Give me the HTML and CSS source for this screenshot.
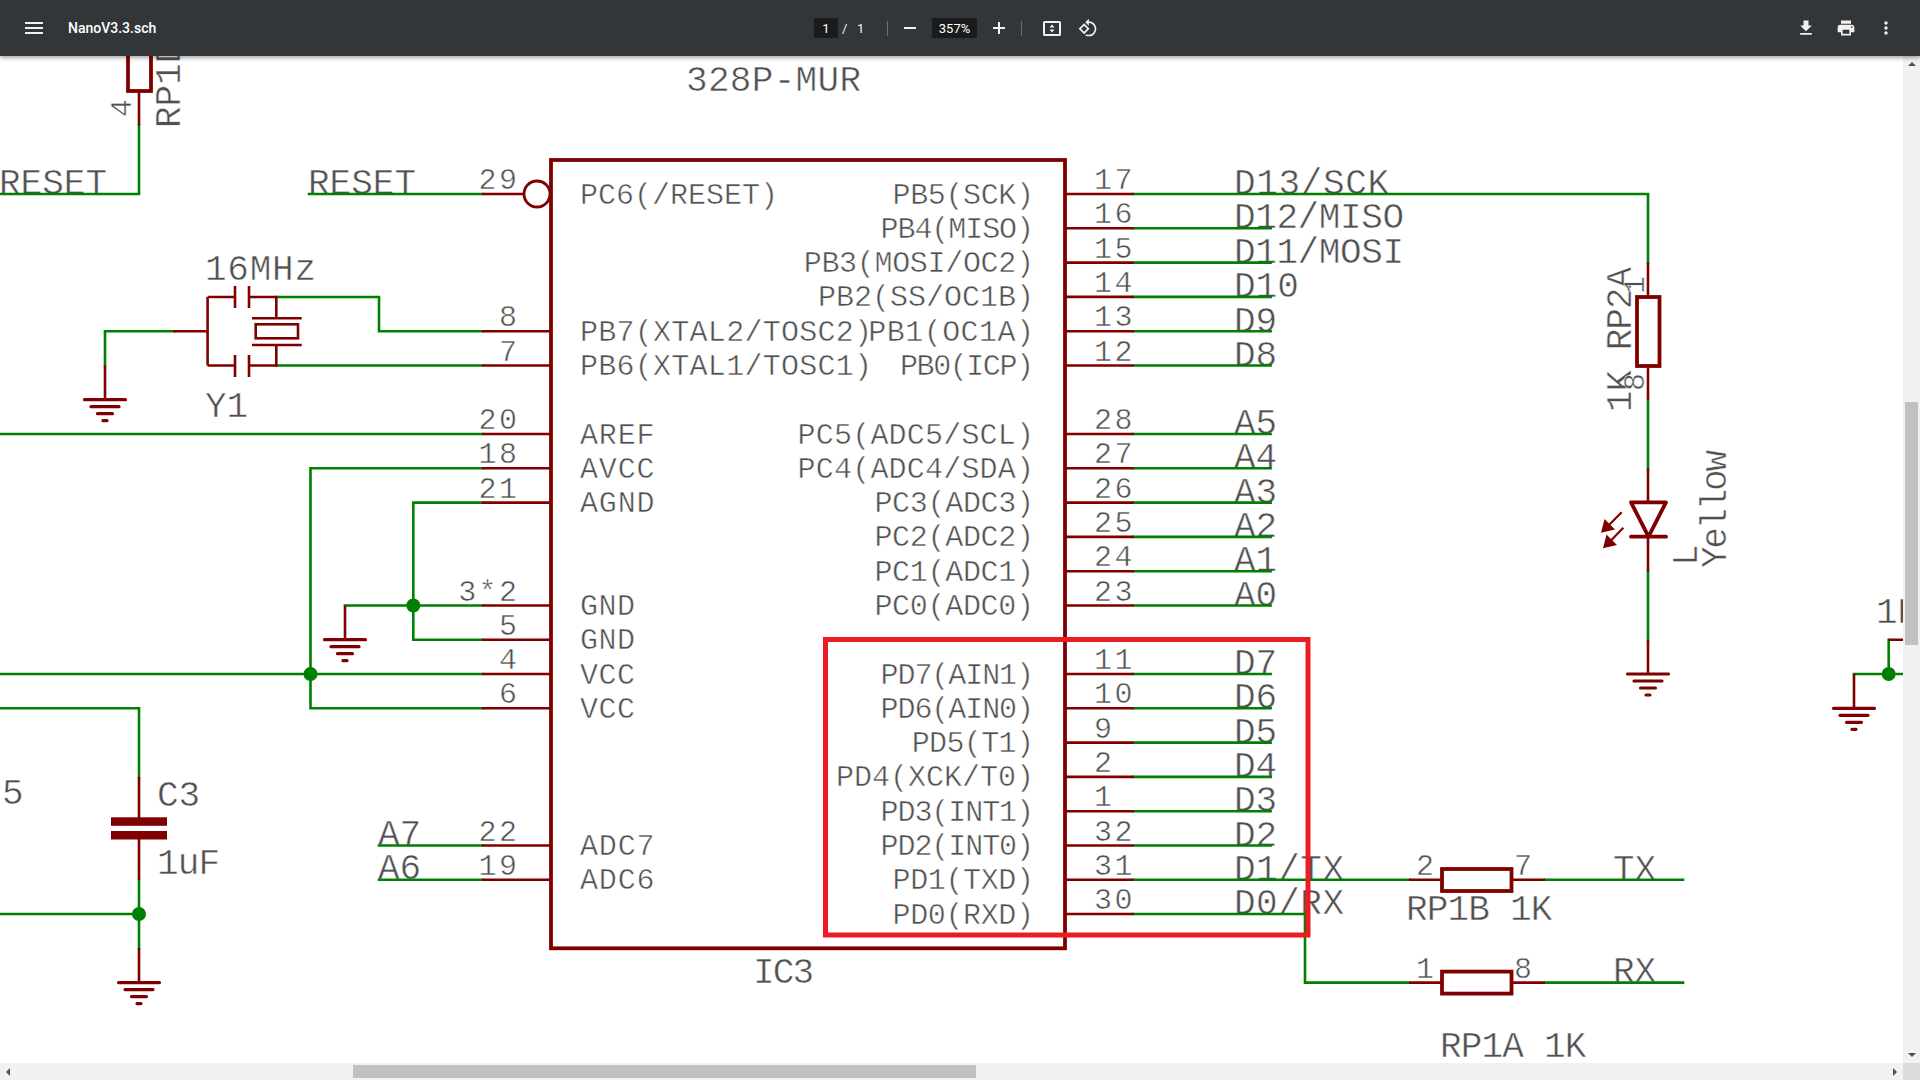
FILE: index.html
```
<!DOCTYPE html>
<html lang="en">
<head>
<meta charset="utf-8">
<title>NanoV3.3.sch</title>
<link rel="stylesheet" href="styles.css">
</head>
<body>
<header class="toolbar">
  <div class="tb-left">
    <svg class="ic ic-menu" viewBox="0 0 24 24"><path d="M3 18h18v-2H3v2zm0-5h18v-2H3v2zm0-7v2h18V6H3z"/></svg>
    <span class="title">NanoV3.3.sch</span>
  </div>
  <div class="tb-center">
    <span class="field field-page">1</span>
    <span class="pages"><span class="slash">/</span><span>1</span></span>
    <span class="sep sep-a"></span>
    <svg class="ic ic-zoom" viewBox="0 0 12 12"><path d="M0 5h12v2H0z"/></svg>
    <span class="field field-zoom">357%</span>
    <svg class="ic ic-zoom" viewBox="0 0 12 12"><path d="M0 5h5V0h2v5h5v2H7v5H5V7H0z"/></svg>
    <span class="sep sep-b"></span>
    <svg class="ic ic-fit" viewBox="0 0 18 15"><path fill-rule="evenodd" d="M1.500 0h15A1.500 1.500 0 0 1 18 1.500v12a1.500 1.500 0 0 1-1.500 1.500h-15A1.500 1.500 0 0 1 0 13.500v-12A1.500 1.500 0 0 1 1.500 0zM2 2v11h14V2z"/><path d="M9 3.500l2.500 3h-5zM9 11.500l-2.500-3h5z"/></svg>
    <svg class="ic ic-rotate" viewBox="0 0 24 24"><path d="M7.340 6.410L.86 12.900l6.490 6.480 6.490-6.480-6.500-6.490zM3.690 12.900l3.660-3.660L11 12.900l-3.660 3.660-3.650-3.660zm15.670-6.260C17.610 4.880 15.300 4 13 4V.76L8.760 5 13 9.240V6c1.790 0 3.580.680 4.950 2.050 2.730 2.730 2.730 7.170 0 9.900C16.580 19.320 14.790 20 13 20c-.970 0-1.940-.210-2.840-.610l-1.490 1.490C10.020 21.620 11.510 22 13 22c2.300 0 4.610-.880 6.360-2.640 3.520-3.510 3.520-9.210 0-12.720z"/></svg>
  </div>
  <div class="tb-right">
    <svg class="ic ic-act" viewBox="0 0 24 24"><path d="M19 9h-4V3H9v6H5l7 7 7-7zM5 18v2h14v-2H5z"/></svg>
    <svg class="ic ic-act" viewBox="0 0 24 24"><path d="M19 8H5c-1.660 0-3 1.340-3 3v6h4v4h12v-4h4v-6c0-1.660-1.340-3-3-3zm-3 11H8v-5h8v5zm3-7c-.550 0-1-.450-1-1s.450-1 1-1 1 .450 1 1-.450 1-1 1zm-1-9H6v4h12V3z"/></svg>
    <svg class="ic ic-act" viewBox="0 0 24 24"><path d="M12 8c1.100 0 2-.900 2-2s-.900-2-2-2-2 .900-2 2 .900 2 2 2zm0 2c-1.100 0-2 .900-2 2s.900 2 2 2 2-.900 2-2-.900-2-2-2zm0 6c-1.100 0-2 .900-2 2s.900 2 2 2 2-.900 2-2-.900-2-2-2z"/></svg>
  </div>
</header>
<main class="viewer">
  <svg class="sheet" viewBox="0 56 1903 1007" width="1903" height="1007">
    <defs>
      <g id="gnd">
        <path class="gb" d="M-20.500 0h41M-14 7h28M-7.500 14h15M-2 21h4"/>
      </g>
      <g id="dot"><circle class="dot" r="7"/></g>
    </defs>

    <!-- large labels -->
    <g class="lbl">
      <text x="686" y="91" textLength="175">328P-MUR</text>
      <text x="753" y="983" textLength="61">IC3</text>
      <text x="-1" y="193.500" textLength="108">RESET</text>
      <text x="308" y="193.500" textLength="108">RESET</text>
      <text x="205" y="280" textLength="111">16MHz</text>
      <text x="205" y="417">Y1</text>
      <text x="2" y="804">5</text>
      <text x="157" y="805.500">C3</text>
      <text x="157" y="874" textLength="63">1uF</text>
      <text x="378" y="845">A7</text>
      <text x="378" y="879">A6</text>
      <text x="1234" y="193.500" textLength="155">D13/SCK</text>
      <text x="1234" y="228" textLength="170">D12/MISO</text>
      <text x="1234" y="262.500" textLength="170">D11/MOSI</text>
      <text x="1234" y="297">D10</text>
      <text x="1234" y="331.500">D9</text>
      <text x="1234" y="365.500">D8</text>
      <text x="1234" y="434">A5</text>
      <text x="1234" y="468">A4</text>
      <text x="1234" y="502.500">A3</text>
      <text x="1234" y="536.500">A2</text>
      <text x="1234" y="571">A1</text>
      <text x="1234" y="605.500">A0</text>
      <text x="1234" y="674">D7</text>
      <text x="1234" y="708">D6</text>
      <text x="1234" y="742.500">D5</text>
      <text x="1234" y="776.500">D4</text>
      <text x="1234" y="811">D3</text>
      <text x="1234" y="845.500">D2</text>
      <text x="1234" y="879.500" textLength="110">D1/TX</text>
      <text x="1234" y="913.500" textLength="110">D0/RX</text>
      <text x="1613" y="879.500">TX</text>
      <text x="1613" y="982">RX</text>
      <text x="1406" y="920" textLength="146.300">RP1B 1K</text>
      <text x="1440" y="1057" textLength="146.300">RP1A 1K</text>
      <text x="1876" y="623">1K</text>
      <text transform="translate(180 128) rotate(-90)">RP1D</text>
      <text transform="translate(1631 412) rotate(-90)" textLength="145">1K RP2A</text>
      <text transform="translate(1696.500 566) rotate(-90)">L</text>
      <text transform="translate(1725.500 568) rotate(-90)" textLength="118">Yellow</text>
    </g>

    <!-- pin numbers and small labels -->
    <g class="num pinno end">
      <text x="519.400" y="189">29</text>
      <text x="519.400" y="326.200">8</text>
      <text x="519.400" y="360.500">7</text>
      <text x="519.400" y="429">20</text>
      <text x="519.400" y="463.300">18</text>
      <text x="519.400" y="497.600">21</text>
      <text x="519.400" y="600.500">3*2</text>
      <text x="519.400" y="634.700">5</text>
      <text x="519.400" y="669">4</text>
      <text x="519.400" y="703.300">6</text>
      <text x="519.400" y="840.500">22</text>
      <text x="519.400" y="874.700">19</text>
    </g>
    <g class="num pinno">
      <text x="1094" y="189">17</text>
      <text x="1094" y="223.300">16</text>
      <text x="1094" y="257.600">15</text>
      <text x="1094" y="291.900">14</text>
      <text x="1094" y="326.200">13</text>
      <text x="1094" y="360.500">12</text>
      <text x="1094" y="429">28</text>
      <text x="1094" y="463.300">27</text>
      <text x="1094" y="497.600">26</text>
      <text x="1094" y="531.900">25</text>
      <text x="1094" y="566.200">24</text>
      <text x="1094" y="600.500">23</text>
      <text x="1094" y="669">11</text>
      <text x="1094" y="703.300">10</text>
      <text x="1094" y="737.600">9</text>
      <text x="1094" y="771.900">2</text>
      <text x="1094" y="806.200">1</text>
      <text x="1094" y="840.500">32</text>
      <text x="1094" y="874.700">31</text>
      <text x="1094" y="909">30</text>
      <text x="1416" y="875">2</text>
      <text x="1514" y="875">7</text>
      <text x="1416" y="978">1</text>
      <text x="1514" y="978">8</text>
      <text transform="translate(131 117) rotate(-90)">4</text>
      <text transform="translate(1643.500 294) rotate(-90)">1</text>
      <text transform="translate(1643.500 391) rotate(-90)">8</text>
    </g>
    <!-- pin names inside the IC -->
    <g class="num">
      <text x="580" y="203.500">PC6(/RESET)</text>
      <text x="580" y="340.700" textLength="292">PB7(XTAL2/TOSC2)</text>
      <text x="580" y="375" textLength="292">PB6(XTAL1/TOSC1)</text>
      <text x="580" y="443.500" textLength="74.500">AREF</text>
      <text x="580" y="477.800" textLength="74.500">AVCC</text>
      <text x="580" y="512.100" textLength="74.500">AGND</text>
      <text x="580" y="615" textLength="55">GND</text>
      <text x="580" y="649.200" textLength="55">GND</text>
      <text x="580" y="683.500" textLength="55">VCC</text>
      <text x="580" y="717.800" textLength="55">VCC</text>
      <text x="580" y="855" textLength="74.500">ADC7</text>
      <text x="580" y="889.200" textLength="74.500">ADC6</text>
    </g>
    <g class="num end">
      <text x="1034" y="203.500" textLength="141.500">PB5(SCK)</text>
      <text x="1034" y="237.800" textLength="153.400">PB4(MISO)</text>
      <text x="1034" y="272.100" textLength="230.300">PB3(MOSI/OC2)</text>
      <text x="1034" y="306.400">PB2(SS/OC1B)</text>
      <text x="1034" y="340.700" textLength="165.700">PB1(OC1A)</text>
      <text x="1034" y="375" textLength="134">PB0(ICP)</text>
      <text x="1034" y="443.500" textLength="236.400">PC5(ADC5/SCL)</text>
      <text x="1034" y="477.800" textLength="236.400">PC4(ADC4/SDA)</text>
      <text x="1034" y="512.100" textLength="159.600">PC3(ADC3)</text>
      <text x="1034" y="546.400" textLength="159.600">PC2(ADC2)</text>
      <text x="1034" y="580.700" textLength="159.600">PC1(ADC1)</text>
      <text x="1034" y="615" textLength="159.600">PC0(ADC0)</text>
      <text x="1034" y="683.500" textLength="153.400">PD7(AIN1)</text>
      <text x="1034" y="717.800" textLength="153.400">PD6(AIN0)</text>
      <text x="1034" y="752.100" textLength="122.300">PD5(T1)</text>
      <text x="1034" y="786.400">PD4(XCK/T0)</text>
      <text x="1034" y="820.700" textLength="153.400">PD3(INT1)</text>
      <text x="1034" y="855" textLength="153.400">PD2(INT0)</text>
      <text x="1034" y="889.200" textLength="141.500">PD1(TXD)</text>
      <text x="1034" y="923.500" textLength="141.500">PD0(RXD)</text>
    </g>

    <!-- green nets -->
    <path class="net" d="M0 194H139V125.400"/>
    <path class="net" d="M309 194H482"/>
    <path class="net" d="M276.300 297H379V331.200H482M276.300 365.500H482"/>
    <path class="net" d="M173.300 331.200H105V365.500"/>
    <path class="net" d="M0 434H482M482 468.300H310.500V708.300H482M0 674H482"/>
    <path class="net" d="M482 502.600H413.300V639.700H482M345 605.500H482"/>
    <path class="net" d="M0 708.300H139V777M139 879.700V948.300M0 914H139"/>
    <path class="net" d="M379 845.500H482M379 879.700H482"/>
    <path class="net" d="M1133.600 194H1648V262.600M1133.600 228.300H1270.600M1133.600 262.600H1270.600M1133.600 296.900H1270.600M1133.600 331.200H1270.600M1133.600 365.500H1270.600"/>
    <path class="net" d="M1133.600 434H1270.600M1133.600 468.300H1270.600M1133.600 502.600H1270.600M1133.600 536.900H1270.600M1133.600 571.200H1270.600M1133.600 605.500H1270.600"/>
    <path class="net" d="M1133.600 674H1270.600M1133.600 708.300H1270.600M1133.600 742.600H1270.600M1133.600 776.900H1270.600M1133.600 811.200H1270.600M1133.600 845.500H1270.600"/>
    <path class="net" d="M1133.600 879.700H1409M1133.600 914H1305V982.600H1409M1545 879.700H1683M1545 982.600H1683"/>
    <path class="net" d="M1648 399.700V468.300M1648 571.200V639.700"/>
    <path class="net" d="M1854 674H1903M1888.700 674V639.700"/>

    <!-- dark red pins and symbols -->
    <path class="pin" d="M139 125.400V91M482 194H524"/>
    <path class="pin" d="M173.300 331.200H207.600M207.600 297V365.500M207.600 297H235M249 297H276.300V318.300M207.600 365.500H235M249 365.500H276.300V345"/>
    <path class="pin" d="M235 286V308M249 286V308M235 355V377M249 355V377M252 318.300H301.700M252 345H301.700"/>
    <rect class="pin" x="255.700" y="324.300" width="42.300" height="14"/>
    <path class="pin" d="M482 331.200H550M482 365.500H550M482 434H550M482 468.300H550M482 502.600H550M482 605.500H550M482 639.700H550M482 674H550M482 708.300H550M482 845.500H550M482 879.700H550"/>
    <path class="pin" d="M1065 194H1133.600M1065 228.300H1133.600M1065 262.600H1133.600M1065 296.900H1133.600M1065 331.200H1133.600M1065 365.500H1133.600"/>
    <path class="pin" d="M1065 434H1133.600M1065 468.300H1133.600M1065 502.600H1133.600M1065 536.900H1133.600M1065 571.200H1133.600M1065 605.500H1133.600"/>
    <path class="pin" d="M1065 674H1133.600M1065 708.300H1133.600M1065 742.600H1133.600M1065 776.900H1133.600M1065 811.200H1133.600M1065 845.500H1133.600M1065 879.700H1133.600M1065 914H1133.600"/>
    <path class="pin" d="M105 365.500V399.700M345 605.500V639.700M139 777V818M139 839V879.700M139 948.300V982.600M1854 674V708.300M1888.700 639.700H1903"/>
    <path class="pin" d="M1648 262.600V297M1648 366V399.700M1648 468.300V502.300M1648 536.700V571.200M1648 639.700V674"/>
    <path class="pin" d="M1409 879.700H1442M1511.500 879.700H1545M1409 982.600H1442M1511.500 982.600H1545"/>
    <path class="arrow" d="M1621.700 512.300L1608 526M1623.300 527.700L1610 541.500"/>
    <path class="head" d="M1601 532.700L1604.500 519L1615 529.500zM1603 548.300L1606.500 534.500L1617 545z"/>

    <rect class="body" x="128" y="40" width="23" height="51"/>
    <rect class="body" x="1637" y="297" width="22.500" height="69"/>
    <rect class="body" x="1442" y="869" width="69.500" height="22"/>
    <rect class="body" x="1442" y="971.600" width="69.500" height="22"/>
    <path class="led" d="M1631 502.300H1666L1648.500 536.700zM1631 536.700H1666"/>
    <rect class="plate" x="111" y="817.300" width="56" height="8.500"/>
    <rect class="plate" x="111" y="831" width="56" height="8.500"/>

    <rect class="ic-box" x="551" y="160" width="514" height="788.300"/>
    <circle class="ring" cx="537" cy="194" r="13"/>

    <use href="#gnd" x="105" y="399.700"/>
    <use href="#gnd" x="345" y="639.700"/>
    <use href="#gnd" x="139" y="982.600"/>
    <use href="#gnd" x="1648" y="674"/>
    <use href="#gnd" x="1854" y="708.300"/>

    <use href="#dot" x="413.300" y="605.500"/>
    <use href="#dot" x="310.500" y="674"/>
    <use href="#dot" x="139" y="914"/>
    <use href="#dot" x="1888.700" y="674"/>

    <rect class="mark" x="825.500" y="639.500" width="482.500" height="295.500"/>
  </svg>

  <div class="vbar">
    <span class="tri tri-up"></span>
    <div class="vtrack"><div class="vthumb"></div></div>
    <span class="tri tri-down"></span>
  </div>
  <div class="hbar">
    <span class="tri tri-left"></span>
    <div class="htrack"><div class="hthumb"></div></div>
    <span class="tri tri-right"></span>
  </div>
  <div class="corner"></div>
</main>
</body>
</html>
```
FILE: styles.css
```
* { box-sizing: border-box; }
html, body { margin: 0; height: 100%; }
body {
  display: flex;
  flex-direction: column;
  height: 100vh;
  overflow: hidden;
  background: #fff;
  font-family: Roboto, "Liberation Sans", sans-serif;
}

/* toolbar */
.toolbar {
  position: relative;
  z-index: 2;
  flex: 0 0 56px;
  display: grid;
  grid-template-columns: 814px auto 1fr;
  align-items: center;
  background: #323639;
  color: #fff;
  box-shadow: 0 2px 4px rgba(0, 0, 0, .35);
}
.ic { display: block; fill: #f1f1f1; flex: none; }
.tb-left { display: flex; align-items: center; padding-left: 22px; }
.ic-menu { width: 24px; height: 24px; }
.title { margin-left: 22px; font-size: 14px; font-weight: 500; }
.tb-center { display: flex; align-items: center; width: 284px; }
.field {
  display: flex;
  align-items: center;
  justify-content: center;
  height: 20px;
  background: #191b1c;
  font-size: 13px;
}
.field-page { width: 24px; }
.field-zoom { width: 45px; margin: 0 16px; }
.pages { display: flex; width: 49px; padding-left: 4px; font-size: 13px; color: #f1f1f1; }
.slash { width: 15px; }
.sep { width: 1px; height: 15px; background: #6d7073; }
.sep-a { margin-right: 16px; }
.sep-b { margin: 0 21px 0 16px; }
.ic-zoom { width: 12px; height: 12px; }
.ic-fit { width: 18px; height: 15px; }
.ic-rotate { width: 20px; height: 20px; margin-left: 17px; }
.tb-right {
  display: flex;
  align-items: center;
  justify-content: flex-end;
  gap: 20px;
  padding-right: 24px;
}
.ic-act { width: 20px; height: 20px; }

/* viewer */
.viewer {
  flex: 1;
  min-height: 0;
  display: grid;
  grid-template-columns: 1903px 17px;
  grid-template-rows: 1007px 17px;
}
.sheet { display: block; grid-column: 1; grid-row: 1; background: #fff; }

/* schematic strokes */
.net, .pin, .arrow { fill: none; stroke-width: 2.6; }
.net { stroke: #008000; stroke-linejoin: miter; stroke-linecap: square; }
.pin { stroke: #800000; }
.arrow { stroke: #800000; stroke-width: 2.2; }
.head { fill: #800000; }
.body { fill: #fff; stroke: #800000; stroke-width: 3.800; }
.ring { fill: #fff; stroke: #800000; stroke-width: 2.800; }
.led { fill: none; stroke: #800000; stroke-width: 3.800; stroke-linecap: round; stroke-linejoin: round; }
.plate { fill: #800000; }
.ic-box { fill: none; stroke: #800000; stroke-width: 3.800; }
.gb { fill: none; stroke: #800000; stroke-width: 3.200; stroke-linecap: round; }
.dot { fill: #008000; }
.mark { fill: none; stroke: #ed1c24; stroke-width: 5; }

/* schematic text */
.lbl text, .num text {
  font-family: "Liberation Mono", monospace;
  fill: #505050;
  stroke: #fff;
  stroke-width: .5px;
}
.lbl text { font-size: 36px; }
.num text { font-size: 30px; }
.pinno text { letter-spacing: 2.400px; }
.end text { text-anchor: end; }

/* scrollbars */
.vbar, .hbar { background: #f1f1f1; display: flex; align-items: center; }
.vbar { grid-column: 2; grid-row: 1; flex-direction: column; }
.hbar { grid-column: 1; grid-row: 2; }
.vtrack { flex: 1; width: 100%; padding: 333px 2px 0; }
.vthumb { height: 243px; background: #c1c1c1; }
.htrack { flex: 1; height: 100%; padding: 2px 0 2px 340px; }
.hthumb { width: 623px; height: 13px; background: #c1c1c1; }
.corner { grid-column: 2; grid-row: 2; background: #dcdcdc; }
.tri { display: block; width: 0; height: 0; border-style: solid; border-color: transparent; flex: none; }
.tri-up { margin: 6px 0 3px; border-width: 0 4px 4px; border-bottom-color: #505050; }
.tri-down { margin: 3px 0 6px; border-width: 4px 4px 0; border-top-color: #505050; }
.tri-left { margin: 0 3px 0 6px; border-width: 4px 4px 4px 0; border-right-color: #505050; }
.tri-right { margin: 0 6px 0 3px; border-width: 4px 0 4px 4px; border-left-color: #505050; }
```
